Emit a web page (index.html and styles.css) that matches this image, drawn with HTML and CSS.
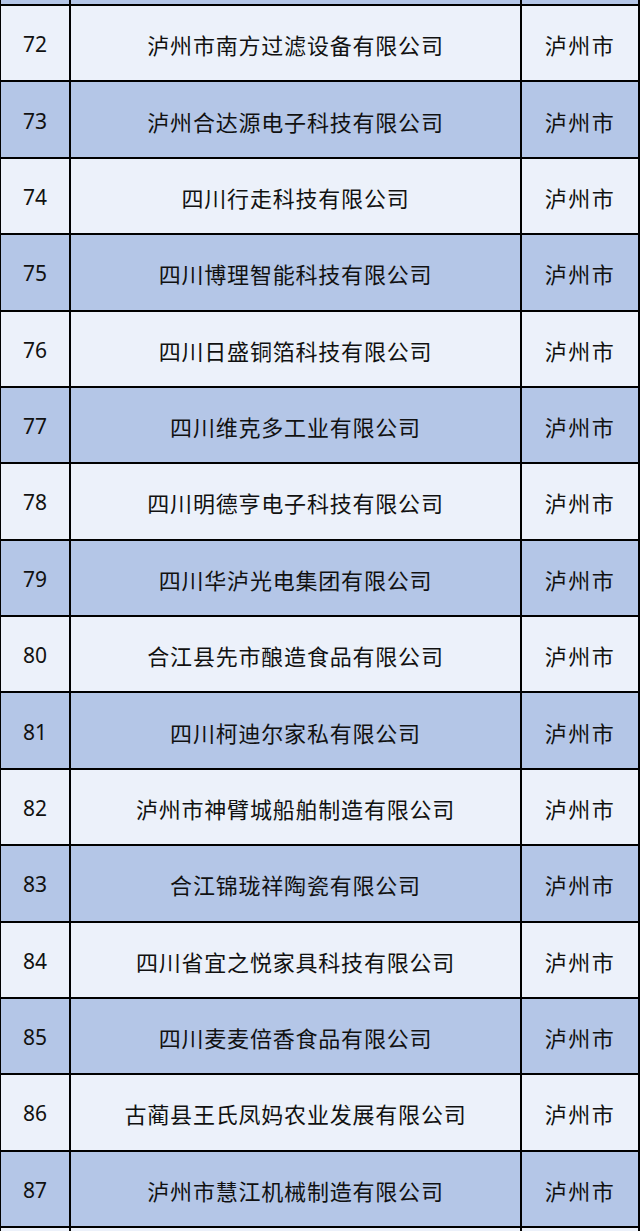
FILE: index.html
```html
<!DOCTYPE html>
<html lang="zh-CN">
<head>
<meta charset="utf-8">
<title>泸州市企业名单</title>
<link rel="stylesheet" href="styles.css">
</head>
<body>
<div class="sheet">
  <div class="cell dark num"></div><div class="cell dark name"></div><div class="cell dark city"></div>
  <div class="cell light num">72</div><div class="cell light name">泸州市南方过滤设备有限公司</div><div class="cell light city">泸州市</div>
  <div class="cell dark num">73</div><div class="cell dark name">泸州合达源电子科技有限公司</div><div class="cell dark city">泸州市</div>
  <div class="cell light num">74</div><div class="cell light name">四川行走科技有限公司</div><div class="cell light city">泸州市</div>
  <div class="cell dark num">75</div><div class="cell dark name">四川博理智能科技有限公司</div><div class="cell dark city">泸州市</div>
  <div class="cell light num">76</div><div class="cell light name">四川日盛铜箔科技有限公司</div><div class="cell light city">泸州市</div>
  <div class="cell dark num">77</div><div class="cell dark name">四川维克多工业有限公司</div><div class="cell dark city">泸州市</div>
  <div class="cell light num">78</div><div class="cell light name">四川明德亨电子科技有限公司</div><div class="cell light city">泸州市</div>
  <div class="cell dark num">79</div><div class="cell dark name">四川华泸光电集团有限公司</div><div class="cell dark city">泸州市</div>
  <div class="cell light num">80</div><div class="cell light name">合江县先市酿造食品有限公司</div><div class="cell light city">泸州市</div>
  <div class="cell dark num">81</div><div class="cell dark name">四川柯迪尔家私有限公司</div><div class="cell dark city">泸州市</div>
  <div class="cell light num">82</div><div class="cell light name">泸州市神臂城船舶制造有限公司</div><div class="cell light city">泸州市</div>
  <div class="cell dark num">83</div><div class="cell dark name">合江锦珑祥陶瓷有限公司</div><div class="cell dark city">泸州市</div>
  <div class="cell light num">84</div><div class="cell light name">四川省宜之悦家具科技有限公司</div><div class="cell light city">泸州市</div>
  <div class="cell dark num">85</div><div class="cell dark name">四川麦麦倍香食品有限公司</div><div class="cell dark city">泸州市</div>
  <div class="cell light num">86</div><div class="cell light name">古蔺县王氏凤妈农业发展有限公司</div><div class="cell light city">泸州市</div>
  <div class="cell dark num">87</div><div class="cell dark name">泸州市慧江机械制造有限公司</div><div class="cell dark city">泸州市</div>
  <div class="cell light num"></div><div class="cell light name"></div><div class="cell light city"></div>
</div>
</body>
</html>
```

FILE: styles.css
```css
html, body {
  margin: 0;
  padding: 0;
  background: #ecf1fa;
  overflow: hidden;
}

.sheet {
  display: grid;
  grid-template-columns: 68px 449px 116px;
  grid-auto-rows: 74.375px;
  gap: 2px;
  padding: 2px;
  background: #000;
  width: max-content;
  margin-top: -72.375px;
  margin-left: -1px;
  font-family: "Noto Sans CJK SC", "Noto Sans", sans-serif;
  color: #111;
}

.cell {
  display: flex;
  align-items: center;
  justify-content: center;
  padding-top: 2px;
  box-sizing: border-box;
  font-size: 22px;
  letter-spacing: 0.8px;
  white-space: nowrap;
}

.light { background: #ecf1fa; }
.dark { background: #b4c6e7; }

.num {
  font-family: "Noto Sans", "Liberation Sans", sans-serif;
  font-size: 21px;
  letter-spacing: 0;
}

.city {
  letter-spacing: 1.5px;
}
```
